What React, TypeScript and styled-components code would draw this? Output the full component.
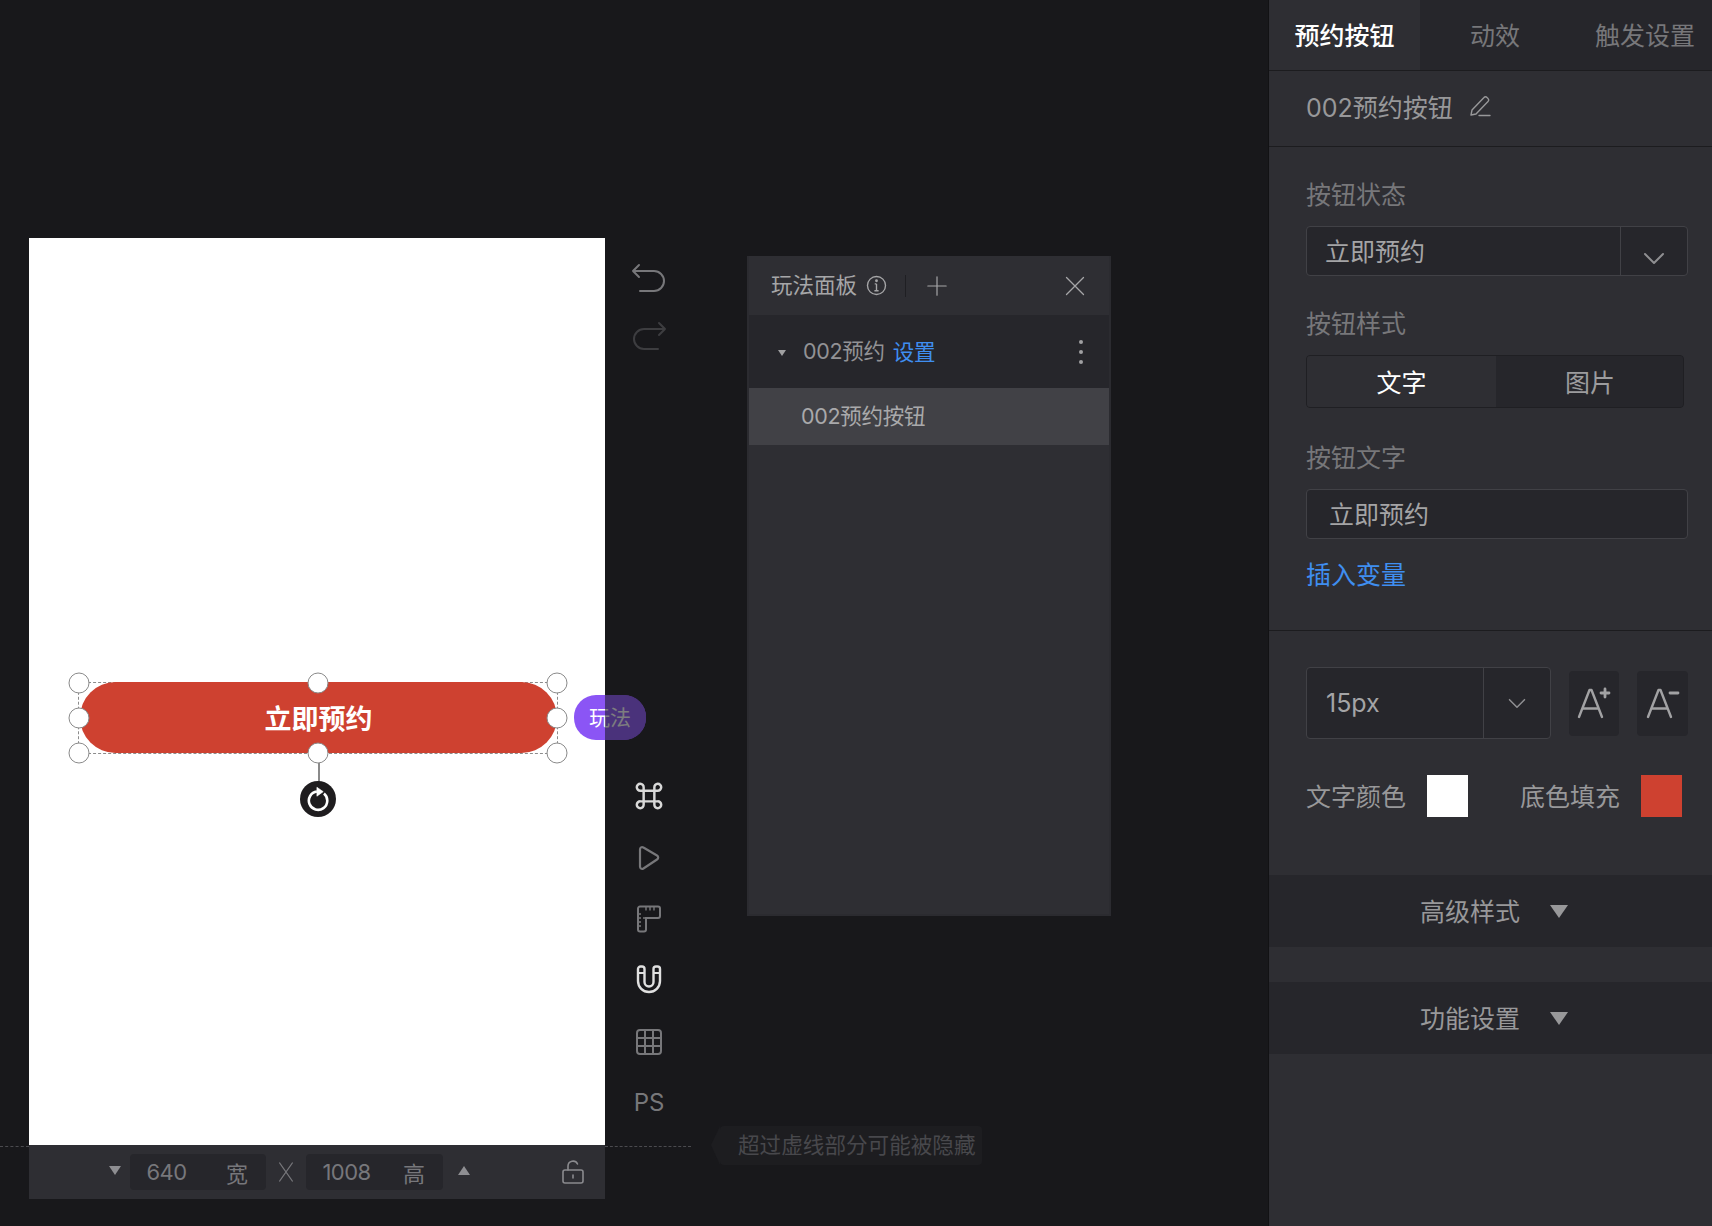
import styled, { createGlobalStyle } from "styled-components";

/**
 * Global
 */

const GlobalStyle = createGlobalStyle`
  html, body {
    margin: 0;
    padding: 0;
    background: #18181b;
  }
  * {
    box-sizing: border-box;
  }
  body {
    font-family: Inter, "Noto Sans CJK SC", "Liberation Sans", sans-serif;
  }
`;

/**
 * Page layout
 */

const Page = styled.div`
  display: flex;
  height: 1226px;
  overflow: hidden;
  width: 1712px;
`;

const Stage = styled.div`
  align-items: flex-start;
  background: #18181b;
  display: flex;
  flex: none;
  height: 100%;
  padding: 238px 0 0 29px;
  position: relative;
  width: 1268px;
`;

const PhoneColumn = styled.div`
  display: flex;
  flex: none;
  flex-direction: column;
  width: 576px;
`;

const Phone = styled.div`
  background: #ffffff;
  height: 907px;
  position: relative;
`;

/**
 * Selection on the phone canvas
 */

const SelectionFrame = styled.div`
  border: 1px dashed #8c8c8c;
  height: 72px;
  left: 49px;
  position: absolute;
  top: 444px;
  width: 480px;
`;

const PhoneButton = styled.div`
  align-items: center;
  background: #ce4130;
  border-radius: 36px;
  color: #ffffff;
  display: flex;
  font-family: "Noto Sans CJK SC", sans-serif;
  font-size: 27px;
  font-weight: 700;
  height: 71px;
  justify-content: center;
  margin: -1px 0 0 1px;
  padding-bottom: 1px;
  width: 477px;
`;

const Handle = styled.span<{ $x: number; $y: number }>`
  background: #ffffff;
  border: 1px solid #8a8a8a;
  border-radius: 50%;
  height: 21px;
  left: ${({ $x }) => $x}%;
  position: absolute;
  top: ${({ $y }) => $y}%;
  transform: translate(-50%, -50%);
  width: 21px;
`;

const RotateStem = styled.span`
  background: #8a8a8a;
  height: 20px;
  left: 50%;
  position: absolute;
  top: 80px;
  width: 2px;
`;

const RotateKnob = styled.span`
  align-items: center;
  background: #1f1d1f;
  border-radius: 50%;
  color: #ffffff;
  display: flex;
  height: 36px;
  justify-content: center;
  left: 50%;
  position: absolute;
  top: 98px;
  transform: translateX(-50%);
  width: 36px;
`;

const PlayPill = styled.div`
  align-items: center;
  background: #8b55f5;
  border-radius: 22px;
  color: #ffffff;
  display: flex;
  font-family: "Noto Sans CJK SC", sans-serif;
  font-size: 21px;
  height: 45px;
  justify-content: center;
  left: 545px;
  overflow: hidden;
  padding-bottom: 4px;
  position: absolute;
  top: 457px;
  width: 72px;
`;

const PillShade = styled.span`
  background: rgba(24, 24, 27, 0.56);
  bottom: 0;
  left: 31px;
  position: absolute;
  right: 0;
  top: 0;
`;

/**
 * Size bar under the phone
 */

const SizeBar = styled.div`
  align-items: center;
  background: #2e2e33;
  display: flex;
  height: 54px;
  padding: 0 21px 0 80px;
`;

const SizeField = styled.div<{ $width: number }>`
  align-items: center;
  background: #26262b;
  border-radius: 4px;
  color: #77777b;
  display: flex;
  font-size: 22px;
  height: 36px;
  justify-content: space-between;
  padding: 0 18px 0 16.5px;
  width: ${({ $width }) => $width}px;
`;

const SizeValue = styled.span`
  letter-spacing: -0.6px;
`;

const Times = styled.span`
  align-items: center;
  color: #77777b;
  display: flex;
  justify-content: center;
  width: 40px;
`;

const SmallTriangle = styled.span<{ $up?: boolean }>`
  border-left: 6px solid transparent;
  border-right: 6px solid transparent;
  ${({ $up }) =>
    $up
      ? "border-bottom: 9px solid #8e8e92; margin: -3px 0 0 15px;"
      : "border-top: 9px solid #8e8e92; margin: -3px 9px 0 0;"}
  height: 0;
  width: 0;
`;

const LockButton = styled.span`
  color: #8a8a8e;
  display: flex;
  margin-left: auto;
`;

/**
 * Canvas overlay notes
 */

const DashedGuide = styled.div<{ $left: number; $width: number }>`
  border-top: 1px dashed #4b4b4f;
  height: 0;
  left: ${({ $left }) => $left}px;
  position: absolute;
  top: 1146px;
  width: ${({ $width }) => $width}px;
`;

const GuideNote = styled.div`
  align-items: center;
  background: #1d1d20;
  border-radius: 4px;
  color: #48484c;
  display: flex;
  font-family: "Noto Sans CJK SC", sans-serif;
  font-size: 21.6px;
  height: 39px;
  left: 720px;
  padding: 0 0 4px 18px;
  position: absolute;
  top: 1126px;
  width: 262px;
  &::before {
    border-bottom: 20px solid transparent;
    border-right: 9px solid #1d1d20;
    border-top: 19px solid transparent;
    content: "";
    left: -9px;
    position: absolute;
    top: 0;
  }
`;

/**
 * Tool rail
 */

const ToolRail = styled.div`
  align-items: center;
  display: flex;
  flex: none;
  flex-direction: column;
  padding-top: 22px;
  width: 88px;
`;

const ToolButton = styled.span<{ $tone: string; $gap: number }>`
  align-items: center;
  color: ${({ $tone }) => $tone};
  display: flex;
  font-size: 24px;
  height: 36px;
  justify-content: center;
  margin-bottom: ${({ $gap }) => $gap}px;
  width: 36px;
`;

/**
 * Play panel
 */

const PlayPanel = styled.section`
  background: #2e2e33;
  border: 2px solid #2b2b30;
  border-top: 0;
  display: flex;
  flex: none;
  flex-direction: column;
  height: 660px;
  margin: 18px 0 0 54px;
  width: 364px;
`;

const PlayHeader = styled.header`
  align-items: center;
  color: #a6a6a8;
  display: flex;
  flex: none;
  font-size: 21.5px;
  height: 59px;
  padding: 0 22px 0 22px;
`;

const HeaderDivider = styled.span`
  background: #1f1f23;
  height: 22px;
  margin: 0 20px 0 18px;
  width: 1px;
`;

const HeaderTitle = styled.span`
  margin: -4px 9px 0 0;
`;

const HeaderIcon = styled.span<{ $push?: boolean }>`
  color: #a6a6a8;
  display: flex;
  margin-left: ${({ $push }) => ($push ? "auto" : "0")};
`;

const GroupRow = styled.div`
  align-items: center;
  background: #26262b;
  color: #929295;
  display: flex;
  flex: none;
  font-size: 21.5px;
  height: 73px;
  letter-spacing: -0.3px;
  padding: 0 25px 0 29px;
`;

const GroupCaret = styled.span`
  border-left: 4px solid transparent;
  border-right: 4px solid transparent;
  border-top: 6px solid #a0a0a2;
  margin: 2px 17px 0 0;
`;

const GroupName = styled.span`
  margin-top: -5px;
`;

const LinkText = styled.span<{ $size: number }>`
  color: #3f8ef0;
  font-size: ${({ $size }) => $size}px;
`;

const GroupLink = styled(LinkText)`
  margin: -3px 0 0 8px;
`;

const DotsButton = styled.span`
  color: #a0a0a2;
  display: flex;
  margin-left: auto;
`;

const LayerRow = styled.div`
  align-items: center;
  background: #414146;
  color: #a9a9ab;
  display: flex;
  flex: none;
  font-size: 21.5px;
  height: 57px;
  letter-spacing: -0.3px;
  padding: 0 0 5px 52px;
`;

/**
 * Settings sidebar
 */

const Sidebar = styled.aside`
  background: #2e2e33;
  border-left: 1px solid #121214;
  display: flex;
  flex: none;
  flex-direction: column;
  font-family: Inter, "Noto Sans CJK SC", sans-serif;
  height: 100%;
  overflow: hidden;
  width: 444px;
`;

const TabRow = styled.div`
  border-bottom: 1px solid #1c1c1f;
  display: flex;
  flex: none;
  height: 71px;
`;

const Tab = styled.div<{ $active?: boolean }>`
  align-items: center;
  background: ${({ $active }) => ($active ? "#2e2e33" : "#26262b")};
  color: ${({ $active }) => ($active ? "#ffffff" : "#77777a")};
  display: flex;
  flex: none;
  font-size: 25px;
  font-weight: ${({ $active }) => ($active ? 500 : 400)};
  justify-content: center;
  padding-bottom: 2px;
  width: ${({ $active }) => ($active ? 151 : 150)}px;
`;

const NameRow = styled.div`
  align-items: center;
  border-bottom: 1px solid #1c1c1f;
  color: #98989a;
  display: flex;
  flex: none;
  font-size: 25px;
  gap: 16px;
  height: 76px;
  padding: 0 0 6px 37px;
`;

const FormSection = styled.div`
  border-bottom: 1px solid #1c1c1f;
  display: flex;
  flex: none;
  flex-direction: column;
  height: 484px;
  padding: 29px 24px 0 37px;
`;

const FieldLabel = styled.div<{ $top: number }>`
  color: #77777a;
  font-size: 25px;
  line-height: 38px;
  margin: ${({ $top }) => $top}px 0 12px;
`;

const ValueBox = styled.div`
  align-items: stretch;
  background: #26262b;
  border: 1px solid #414146;
  border-radius: 4px;
  color: #a4a4a6;
  display: flex;
  font-size: 25px;
  height: 50px;
  width: 382px;
`;

const ValueText = styled.span<{ $inset: number; $lift: number }>`
  align-items: center;
  display: flex;
  flex: 1;
  padding: 0 0 ${({ $lift }) => $lift}px ${({ $inset }) => $inset}px;
`;

const ChevronCell = styled.span<{ $width: number; $drop?: number }>`
  align-items: center;
  border-left: 1px solid #414146;
  color: #8f8f92;
  display: flex;
  flex: none;
  justify-content: center;
  padding-top: ${({ $drop }) => $drop ?? 0}px;
  width: ${({ $width }) => $width}px;
`;

const Segmented = styled.div`
  background: #26262b;
  border: 1px solid #1f1f23;
  border-radius: 4px;
  display: flex;
  height: 53px;
  overflow: hidden;
  width: 378px;
`;

const Segment = styled.div<{ $active?: boolean }>`
  align-items: center;
  background: ${({ $active }) => ($active ? "#2e2e33" : "#26262b")};
  color: ${({ $active }) => ($active ? "#ffffff" : "#9c9c9e")};
  display: flex;
  flex: none;
  font-size: 25px;
  justify-content: center;
  padding-bottom: 2px;
  width: ${({ $active }) => ($active ? 189 : 188)}px;
`;

const InsertLink = styled(LinkText)`
  line-height: 38px;
  margin-top: 17px;
`;

const FontSection = styled.div`
  display: flex;
  flex: none;
  flex-direction: column;
  padding: 36px 24px 0 37px;
`;

const FontRow = styled.div`
  align-items: center;
  display: flex;
`;

const SizeBox = styled(ValueBox)`
  height: 72px;
  width: 246px;
`;

const GlyphButton = styled.span<{ $gap: number }>`
  align-items: center;
  background: #26262b;
  border-radius: 4px;
  color: #a2a2a4;
  display: flex;
  height: 65px;
  justify-content: center;
  margin-left: ${({ $gap }) => $gap}px;
  padding-left: 3px;
  width: 51px;
`;

const ColorRow = styled.div`
  align-items: center;
  display: flex;
  margin-top: 36px;
`;

const ColorLabel = styled.span`
  color: #98989a;
  font-size: 25px;
  margin-top: -2px;
`;

const Swatch = styled.span<{ $color: string; $after: number }>`
  background: ${({ $color }) => $color};
  flex: none;
  height: 42px;
  margin: 0 ${({ $after }) => $after}px 0 21px;
  width: 41px;
`;

const FoldBand = styled.div<{ $top: number }>`
  align-items: center;
  background: #26262b;
  color: #98989a;
  display: flex;
  flex: none;
  font-size: 25px;
  height: 72px;
  margin-top: ${({ $top }) => $top}px;
  padding: 0 0 2px 151px;
`;

const FoldCaret = styled.span`
  border-left: 9px solid transparent;
  border-right: 9px solid transparent;
  border-top: 13px solid #98989a;
  margin: 3px 0 0 30px;
`;

/**
 * Icons
 */

const Line = ({ size, w = 2, children }: { size: number; w?: number; children: React.ReactNode }) => (
  <svg
    width={size}
    height={size}
    viewBox="0 0 24 24"
    fill="none"
    stroke="currentColor"
    strokeWidth={w}
    strokeLinecap="round"
    strokeLinejoin="round"
  >
    {children}
  </svg>
);

const Chevron = ({ size, w = 2 }: { size: number; w?: number }) => (
  <Line size={size} w={w}>
    <path d="M3 8l9 9 9-9" />
  </Line>
);

const AGlyph = ({ plus }: { plus?: boolean }) => (
  <svg width="36" height="32" viewBox="0 0 36 32" fill="none" stroke="currentColor" strokeWidth="2.4" strokeLinecap="round" strokeLinejoin="round">
    <path d="M2 30L12.500 3h2L25 30" />
    <path d="M6.500 21.500h14" />
    {plus ? <path d="M24 6h8M28 2v8" strokeWidth="2.8" /> : <path d="M24 6h8" strokeWidth="2.8" />}
  </svg>
);

const TurnArrow = ({ flip }: { flip?: boolean }) => (
  <svg width="36" height="32" viewBox="0 0 36 32" fill="none" stroke="currentColor" strokeWidth="2" strokeLinecap="round" strokeLinejoin="round">
    {flip ? (
      <path d="M28 3l6 6-6 6M34 9H13a10 10 0 0 0 0 20h14" />
    ) : (
      <path d="M8 3L2 9l6 6M2 9h21a10 10 0 0 1 0 20H9" />
    )}
  </svg>
);

/**
 * App
 */

const handles = [
  [0, 0],
  [50, 0],
  [100, 0],
  [0, 50],
  [100, 50],
  [0, 100],
  [50, 100],
  [100, 100],
];

export default function App() {
  return (
    <Page>
      <GlobalStyle />
      <Stage>
        <PhoneColumn>
          <Phone>
            <SelectionFrame>
              <PhoneButton>立即预约</PhoneButton>
              {handles.map(([x, y]) => (
                <Handle key={`${x}-${y}`} $x={x} $y={y} />
              ))}
              <RotateStem />
              <RotateKnob>
                <svg width="26" height="26" viewBox="0 0 24 24" fill="none" stroke="currentColor" strokeWidth="2.4">
                  <path d="M17.500 7A8.500 8.500 0 1 1 11 5.100" />
                  <path d="M11 1.200v8.200l5.800-4.200z" fill="currentColor" strokeWidth="0.6" />
                </svg>
              </RotateKnob>
            </SelectionFrame>
            <PlayPill>
              玩法
              <PillShade />
            </PlayPill>
          </Phone>
          <SizeBar>
            <SmallTriangle />
            <SizeField $width={136}>
              <SizeValue>640</SizeValue>
              <span>宽</span>
            </SizeField>
            <Times>
              <Line size={22} w={1.2}>
                <path d="M5 2l14 20M19 2L5 22" />
              </Line>
            </Times>
            <SizeField $width={137}>
              <SizeValue>1008</SizeValue>
              <span>高</span>
            </SizeField>
            <SmallTriangle $up />
            <LockButton>
              <svg width="22" height="24" viewBox="0 0 22 24" fill="none" stroke="currentColor" strokeWidth="1.6" strokeLinecap="round">
                <rect x="1" y="10" width="20" height="13" rx="2" />
                <path d="M6 10V6a5 5 0 0 1 9.500-2" />
                <path d="M11 15v3" />
              </svg>
            </LockButton>
          </SizeBar>
        </PhoneColumn>

        <ToolRail>
          <ToolButton $tone="#77777a" $gap={22}>
            <TurnArrow />
          </ToolButton>
          <ToolButton $tone="#3d3d40" $gap={424}>
            <TurnArrow flip />
          </ToolButton>
          <ToolButton $tone="#d8d8d8" $gap={26}>
            <svg width="30" height="30" viewBox="0 0 28 28" fill="none" stroke="currentColor" strokeWidth="2.3">
              <path d="M9 9h10v10H9zM9 9H6a3.200 3.200 0 1 1 3-3zM19 9V6a3.200 3.200 0 1 1 3 3zM19 19h3a3.200 3.200 0 1 1-3 3zM9 19v3a3.200 3.200 0 1 1-3-3z" />
            </svg>
          </ToolButton>
          <ToolButton $tone="#77777a" $gap={25}>
            <svg width="24" height="26" viewBox="0 0 24 26" fill="none" stroke="currentColor" strokeWidth="2.200" strokeLinejoin="round">
              <path d="M3 4.500c0-2 1.700-3 3.400-2l13.600 8c1.600 1 1.600 3 0 4l-13.600 9c-1.700 1-3.400 0-3.400-2z" />
            </svg>
          </ToolButton>
          <ToolButton $tone="#77777a" $gap={25}>
            <svg width="28" height="28" viewBox="0 0 28 28" fill="none" stroke="currentColor" strokeWidth="2">
              <path d="M3 3.500a2 2 0 0 1 2-2h18a2 2 0 0 1 2 2V11a2 2 0 0 1-2 2H11v11.500a2 2 0 0 1-2 2H5a2 2 0 0 1-2-2z" />
              <path d="M11 13H8M3 9h3M3 13h3M3 17h3M3 21h3M11 1.500v4M15 1.500v4M19 1.500v4" strokeWidth="1.4" />
            </svg>
          </ToolButton>
          <ToolButton $tone="#e0e0e0" $gap={26}>
            <svg width="26" height="30" viewBox="0 0 26 30" fill="none" stroke="currentColor" strokeWidth="2.400">
              <path d="M2 4a2.500 2.500 0 0 1 2.500-2.500h1.500A2.500 2.500 0 0 1 8.500 4v13a4.500 4.500 0 0 0 9 0V4A2.500 2.500 0 0 1 20 1.500h1.500A2.500 2.500 0 0 1 24 4v12a11 11 0 0 1-22 0z" />
              <path d="M2 8h6.500M17.500 8H24" strokeWidth="1.800" />
            </svg>
          </ToolButton>
          <ToolButton $tone="#77777a" $gap={24}>
            <svg width="28" height="28" viewBox="0 0 28 28" fill="none" stroke="currentColor" strokeWidth="2">
              <rect x="2" y="2" width="24" height="24" rx="3" />
              <path d="M10 2v24M18 2v24M2 10h24M2 18h24" />
            </svg>
          </ToolButton>
          <ToolButton $tone="#77777a" $gap={0}>
            PS
          </ToolButton>
        </ToolRail>

        <PlayPanel>
          <PlayHeader>
            <HeaderTitle>玩法面板</HeaderTitle>
            <HeaderIcon>
              <svg width="21" height="21" viewBox="0 0 20 20" fill="none" stroke="currentColor" strokeWidth="1.300">
                <circle cx="10" cy="10" r="8.600" />
                <path d="M10 8.500V15M8.300 8.500H10M8 15h4" />
                <circle cx="10" cy="5.500" r="0.700" fill="currentColor" />
              </svg>
            </HeaderIcon>
            <HeaderDivider />
            <HeaderIcon>
              <Line size={22} w={1.300}>
                <path d="M12 2v20M2 12h20" />
              </Line>
            </HeaderIcon>
            <HeaderIcon $push>
              <Line size={24} w={1.300}>
                <path d="M3.500 3.500l17 17M20.500 3.500l-17 17" />
              </Line>
            </HeaderIcon>
          </PlayHeader>
          <GroupRow>
            <GroupCaret />
            <GroupName>002预约</GroupName>
            <GroupLink $size={21.5}>设置</GroupLink>
            <DotsButton>
              <svg width="6" height="26" viewBox="0 0 6 26" fill="currentColor">
                <circle cx="3" cy="3" r="2" />
                <circle cx="3" cy="13" r="2" />
                <circle cx="3" cy="23" r="2" />
              </svg>
            </DotsButton>
          </GroupRow>
          <LayerRow>002预约按钮</LayerRow>
        </PlayPanel>

        <DashedGuide $left={0} $width={29} />
        <DashedGuide $left={605} $width={86} />
        <GuideNote>超过虚线部分可能被隐藏</GuideNote>
      </Stage>

      <Sidebar>
        <TabRow>
          <Tab $active>预约按钮</Tab>
          <Tab>动效</Tab>
          <Tab>触发设置</Tab>
        </TabRow>
        <NameRow>
          <span>002预约按钮</span>
          <svg width="22" height="22" viewBox="0 0 22 22" fill="none" stroke="currentColor" strokeWidth="1.400" strokeLinejoin="round" strokeLinecap="round">
            <path d="M2 20l1-5L15 2.500a2 2 0 0 1 3 0l1 1a2 2 0 0 1 0 3L7 19z" />
            <path d="M10 20.500h11" />
          </svg>
        </NameRow>

        <FormSection>
          <FieldLabel $top={0}>按钮状态</FieldLabel>
          <ValueBox>
            <ValueText $inset={18} $lift={3}>立即预约</ValueText>
            <ChevronCell $width={67} $drop={14}>
              <Chevron size={24} w={2} />
            </ChevronCell>
          </ValueBox>
          <FieldLabel $top={29}>按钮样式</FieldLabel>
          <Segmented>
            <Segment $active>文字</Segment>
            <Segment>图片</Segment>
          </Segmented>
          <FieldLabel $top={31}>按钮文字</FieldLabel>
          <ValueBox>
            <ValueText $inset={22} $lift={3}>立即预约</ValueText>
          </ValueBox>
          <InsertLink $size={25}>插入变量</InsertLink>
        </FormSection>

        <FontSection>
          <FontRow>
            <SizeBox>
              <ValueText $inset={19} $lift={0}>15px</ValueText>
              <ChevronCell $width={67}>
                <Chevron size={20} w={1.800} />
              </ChevronCell>
            </SizeBox>
            <GlyphButton $gap={18}>
              <AGlyph plus />
            </GlyphButton>
            <GlyphButton $gap={18}>
              <AGlyph />
            </GlyphButton>
          </FontRow>
          <ColorRow>
            <ColorLabel>文字颜色</ColorLabel>
            <Swatch $color="#ffffff" $after={52} />
            <ColorLabel>底色填充</ColorLabel>
            <Swatch $color="#ce4130" $after={0} />
          </ColorRow>
        </FontSection>

        <FoldBand $top={58}>
          高级样式
          <FoldCaret />
        </FoldBand>
        <FoldBand $top={35}>
          功能设置
          <FoldCaret />
        </FoldBand>
      </Sidebar>
    </Page>
  );
}
